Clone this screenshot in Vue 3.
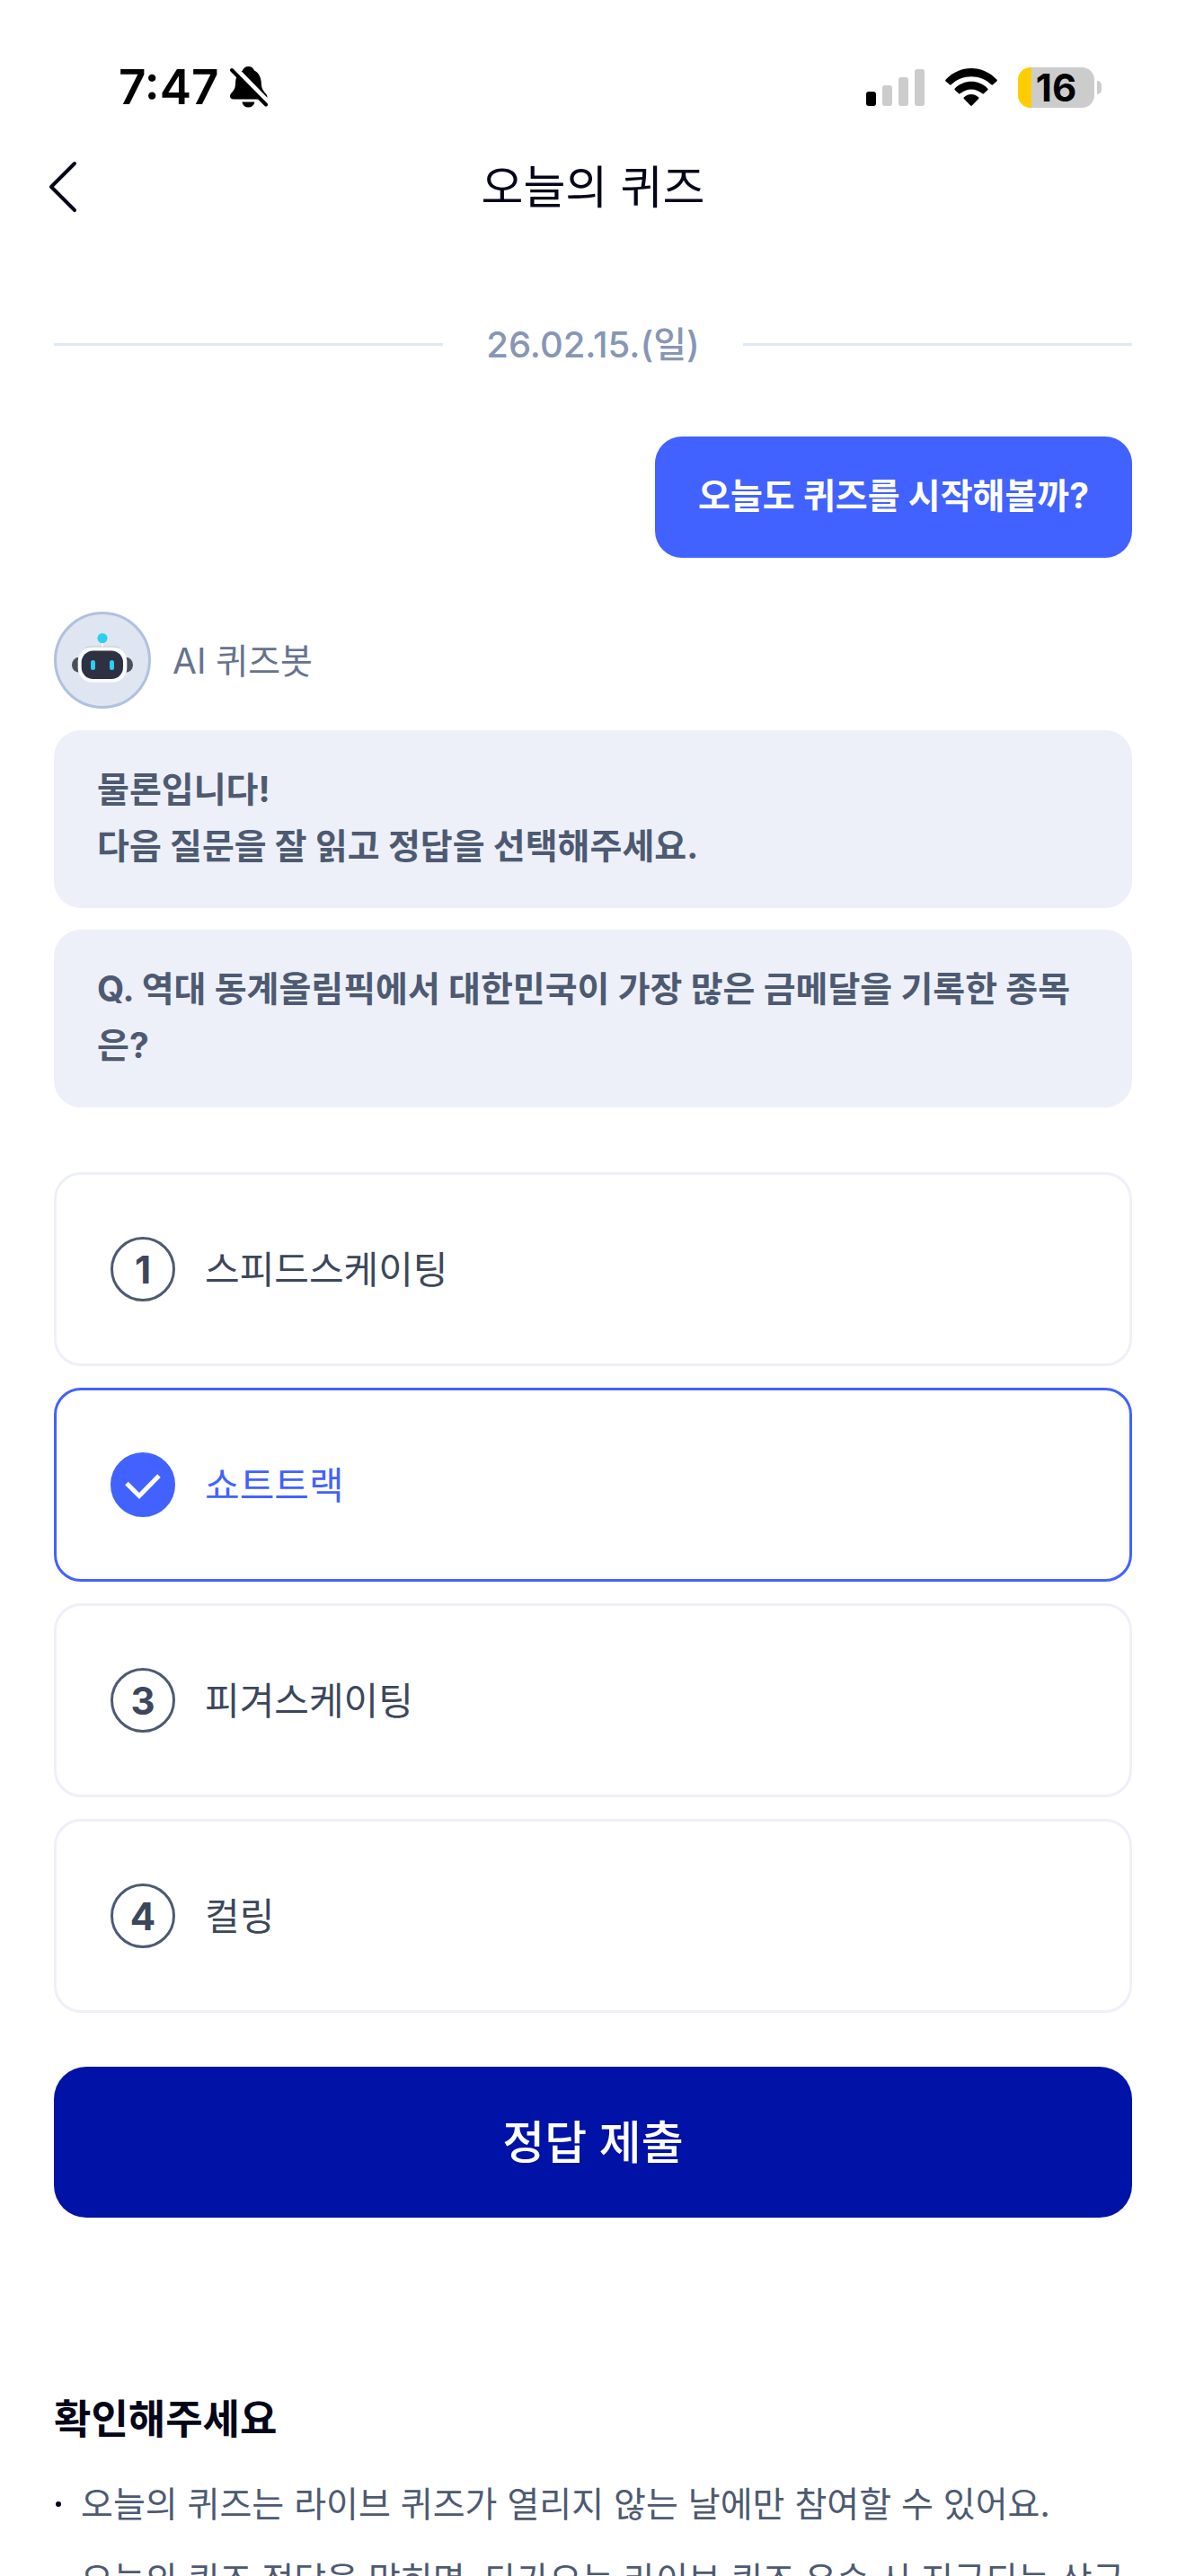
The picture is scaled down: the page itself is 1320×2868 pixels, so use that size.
<script setup>
import { ref } from 'vue'

const options = [
  { id: 1, label: '스피드스케이팅' },
  { id: 2, label: '쇼트트랙' },
  { id: 3, label: '피겨스케이팅' },
  { id: 4, label: '컬링' },
]
const selected = ref(2)

const notices = [
  '오늘의 퀴즈는 라이브 퀴즈가 열리지 않는 날에만 참여할 수 있어요.',
  '오늘의 퀴즈 정답을 맞히면, 다가오는 라이브 퀴즈 우승 시 지급되는 상금',
]
</script>

<template>
  <div class="screen">
    <div class="status">
      <div class="status-left">
        <span class="time">7:47</span>
        <svg class="bell" viewBox="0 0 42 46" width="42" height="46" aria-hidden="true">
          <path d="M20.500 0C24 0 26 2 27 4.500C32 7 34.500 12 34.800 18C35 25 37 27 40 30.500C43 34.500 41 36.500 37.500 36.500H4C-.5 36.500-1 32.500 1.500 29.500C4.500 26.500 6 24.500 6.100 18C6.300 12 9 7 14 4.500C15 2 17 0 20.500 0Z" />
          <path d="M13.400 39.500H27.400C26.500 43.500 24 45.500 20.400 45.500C16.800 45.500 14.300 43.500 13.400 39.500Z" />
          <path d="M3 1L42 41" stroke="#fff" stroke-width="8" />
          <path d="M2 4L40 42.500" stroke="#000" stroke-width="4" stroke-linecap="round" />
        </svg>
      </div>
      <div class="status-right">
        <svg viewBox="0 0 65 42" width="65" height="42" aria-hidden="true">
          <rect x="0" y="26" width="11" height="16" rx="3" />
          <rect x="18" y="19" width="11" height="23" rx="3" fill="#ccc" />
          <rect x="36" y="10" width="11" height="32" rx="3" fill="#ccc" />
          <rect x="54" y="1" width="11" height="41" rx="3" fill="#ccc" />
        </svg>
        <svg viewBox="0 0 58 42" width="58" height="42" aria-hidden="true">
          <path d="M.7 12.600C16-4.200 42-4.200 57.300 12.600C58 13.300 58 13.800 57.400 14.400L53 18.300C52.400 18.900 52 18.800 51.400 18.200C39 6.200 19 6.200 6.600 18.200C6 18.800 5.600 18.900 5 18.300L.6 14.400C0 13.800 0 13.300 .7 12.600Z" />
          <path d="M10.800 22.500C21 12.300 37 12.300 47.200 22.500C47.800 23.100 47.800 23.600 47.200 24.200L42.800 28.200C42.200 28.700 41.800 28.600 41.200 28.100C34 21.800 24 21.800 16.800 28.100C16.200 28.600 15.800 28.700 15.200 28.200L10.800 24.200C10.200 23.600 10.200 23.100 10.800 22.500Z" />
          <path d="M20.900 32.300C25.500 27.800 32.500 27.800 37.100 32.300C37.700 32.900 37.700 33.400 37.100 34L29.800 41.400C29.300 41.900 28.700 41.900 28.200 41.400L20.900 34C20.300 33.400 20.300 32.900 20.900 32.300Z" />
        </svg>
        <div class="battery">
          <div class="cell">16</div>
          <div class="nub"></div>
        </div>
      </div>
    </div>

    <header class="header">
      <button class="back" type="button" aria-label="뒤로">
        <svg viewBox="0 0 32 58" width="32" height="58" aria-hidden="true">
          <path d="M29 3L3 29L29 55" fill="none" stroke="#030519" stroke-width="4" stroke-linecap="round" stroke-linejoin="round" />
        </svg>
      </button>
      <h1>오늘의 퀴즈</h1>
    </header>

    <main>
      <div class="date"><span>26.02.15.(일)</span></div>

      <p class="bubble mine">오늘도 퀴즈를 시작해볼까?</p>

      <div class="bot">
        <div class="avatar">
          <svg viewBox="0 0 108 108" width="108" height="108" aria-hidden="true">
            <circle cx="54" cy="54" r="52.500" fill="#dfe5f1" stroke="#b0c1de" stroke-width="3" />
            <circle cx="54" cy="29.500" r="5.500" fill="#2bcfef" />
            <rect x="53" y="35" width="2" height="5" fill="#fff" />
            <ellipse cx="28" cy="59.300" rx="8" ry="8.500" fill="#4b505e" />
            <ellipse cx="80" cy="59.300" rx="8" ry="8.500" fill="#4b505e" />
            <rect x="26.700" y="39.300" width="54.600" height="39.500" rx="16" fill="#fafbfc" />
            <path d="M35 40.500Q38 39 42 39H66Q70 39 73 40.500" fill="none" stroke="#aeb3be" stroke-width=".6" />
            <rect x="30.700" y="43.500" width="46.300" height="31.500" rx="13" fill="#2d3142" />
            <rect x="41" y="54" width="5" height="11" rx="2.500" fill="#2bcfef" />
            <rect x="62" y="54" width="5" height="11" rx="2.500" fill="#2bcfef" />
          </svg>
        </div>
        <span>AI 퀴즈봇</span>
      </div>

      <p class="bubble">물론입니다!<br />다음 질문을 잘 읽고 정답을 선택해주세요.</p>
      <p class="bubble">Q. 역대 동계올림픽에서 대한민국이 가장 많은 금메달을 기록한 종목은?</p>

      <form @submit.prevent>
        <div class="options">
          <label v-for="o in options" :key="o.id" class="option" :class="{ on: selected === o.id }">
            <input v-model="selected" type="radio" name="answer" :value="o.id" />
            <span class="mark">
              <svg v-if="selected === o.id" viewBox="0 0 72 72" width="72" height="72" aria-hidden="true">
                <path d="M18 34.500L32 48.500L54 26" fill="none" stroke="#fff" stroke-width="5" />
              </svg>
              <template v-else>{{ o.id }}</template>
            </span>
            <span>{{ o.label }}</span>
          </label>
        </div>
        <button class="submit" type="submit">정답 제출</button>
      </form>

      <section class="notice">
        <h2>확인해주세요</h2>
        <ul>
          <li v-for="n in notices" :key="n">{{ n }}</li>
        </ul>
      </section>
    </main>
  </div>
</template>

<style>
body {
  margin: 0;
  background: #fff;
}
</style>

<style scoped>
* {
  box-sizing: border-box;
}
.screen {
  height: 100vh;
  overflow-y: auto;
  scrollbar-width: none;
  background: #fff;
  color: #030519;
  font-family: Inter, 'Noto Sans CJK KR', sans-serif;
  font-size: 39px;
  line-height: 63px;
  word-break: break-all;
}
h1,
h2,
p,
ul {
  margin: 0;
  padding: 0;
}
.status {
  display: flex;
  justify-content: space-between;
  align-items: center;
  height: 142px;
  padding: 52px 94px 0 132px;
  color: #000;
}
.status-left,
.status-right,
.battery {
  display: flex;
  align-items: center;
}
.status-left {
  gap: 12px;
}
.status-right {
  gap: 23px;
}
.time {
  font-size: 53px;
  font-weight: 600;
}
.battery {
  gap: 3px;
}
.cell {
  width: 85px;
  height: 45px;
  border-radius: 14px;
  background: linear-gradient(to right, #fc0 15px, #ccc 15px);
  font-size: 42px;
  font-weight: 700;
  line-height: 45px;
  text-align: center;
}
.nub {
  width: 5px;
  height: 15px;
  border-radius: 0 5px 5px 0;
  background: #ccc;
}
.header {
  display: grid;
  grid-template-columns: 1fr auto 1fr;
  align-items: center;
  height: 132px;
  padding: 0 54px;
}
.back {
  display: flex;
  width: 32px;
  padding: 0;
  border: 0;
  background: none;
  cursor: pointer;
}
h1 {
  font-size: 51px;
  font-weight: 400;
}
main {
  display: flex;
  flex-direction: column;
  padding: 78px 60px 60px;
}
.date {
  display: flex;
  align-items: center;
  gap: 48px;
  margin-bottom: 71px;
  color: #8796b5;
  font-size: 40px;
  font-weight: 500;
}
.date::before,
.date::after {
  content: '';
  flex: 1;
  height: 3px;
  background: #e0e8f2;
}
.bubble {
  margin-bottom: 24px;
  padding: 34px 48px 38px;
  border-radius: 30px;
  background: #edf0f8;
  color: #4d5a72;
  font-weight: 700;
}
.mine {
  align-self: flex-end;
  margin-bottom: 60px;
  background: #4262ff;
  color: #fff;
}
.bot {
  display: flex;
  align-items: center;
  gap: 24px;
  margin-bottom: 24px;
  color: #66738f;
}
.avatar,
.avatar svg {
  display: block;
}
form {
  margin-top: 48px;
}
.options {
  display: flex;
  flex-direction: column;
  gap: 24px;
}
.option {
  display: flex;
  align-items: center;
  gap: 33px;
  height: 216px;
  padding: 0 60px;
  border: 3px solid #edf0f8;
  border-radius: 30px;
  color: #3c475c;
  font-size: 42px;
  cursor: pointer;
}
.option input {
  position: absolute;
  opacity: 0;
}
.mark {
  display: flex;
  align-items: center;
  justify-content: center;
  width: 72px;
  height: 72px;
  border: 3px solid #4d5a72;
  border-radius: 50%;
  font-weight: 700;
}
.mark svg {
  flex: none;
}
.on {
  border-color: #4262ff;
  color: #4262ff;
}
.on .mark {
  border-color: #4262ff;
  background: #4262ff;
}
.submit {
  width: 100%;
  height: 168px;
  margin-top: 60px;
  padding: 0 0 6px;
  border: 0;
  border-radius: 36px;
  background: #0013a6;
  color: #fff;
  font-family: inherit;
  font-size: 51px;
  font-weight: 500;
  cursor: pointer;
}
.notice {
  margin-top: 192px;
}
h2 {
  margin-bottom: 29px;
  font-size: 45px;
  font-weight: 700;
  line-height: 66px;
}
ul {
  display: flex;
  flex-direction: column;
  gap: 21px;
  list-style: none;
}
li {
  display: flex;
  align-items: center;
  gap: 22px;
  color: #4d5a72;
}
li::before {
  content: '';
  flex: none;
  width: 6px;
  height: 6px;
  margin-left: 2px;
  border-radius: 50%;
  background: #030519;
}
</style>
